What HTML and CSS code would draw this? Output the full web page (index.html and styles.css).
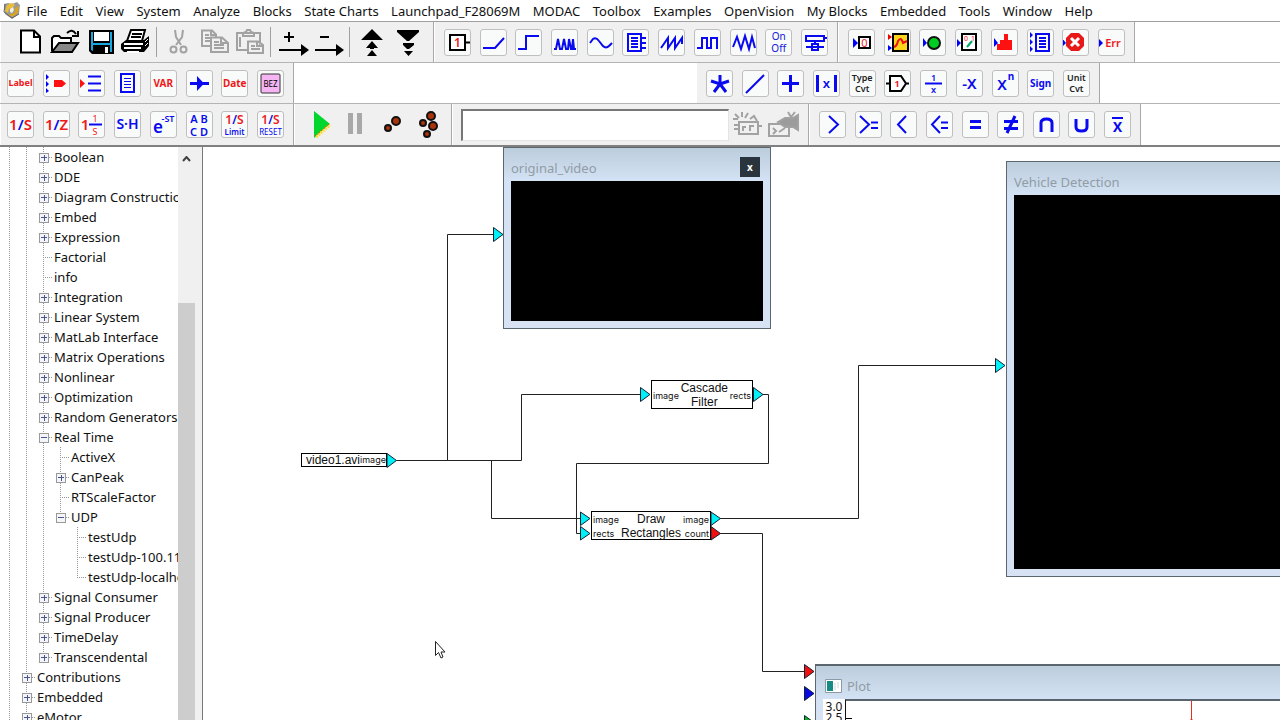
FILE: index.html
```html
<!DOCTYPE html>
<html lang="en">
<head>
<meta charset="utf-8">
<title>Vehicle Detection diagram</title>
<link rel="stylesheet" href="styles.css">
</head>
<body>
<nav class="menubar">
  <svg class="logo" width="18" height="18" viewBox="0 0 18 18"><path d="M1 3 5 2 9 3 14 1 17 4 16 13 9 18 2 13Z" fill="#9a9a98"/><path d="M4 4 9 2 12 4 9 7 6 8 5 12 2 10Z" fill="#e9bd35"/><path d="M12 7 16 5 15 12 9 16 5 13 9 13 12 11Z" fill="#d9a520"/><path d="M7 8 10 6 11 9 9 12 7 11Z" fill="#f4f0dc"/><path d="M2 3 1 11 9 17 16 13" fill="none" stroke="#5f6468"/></svg>
  <button>File</button><button>Edit</button><button>View</button><button>System</button><button>Analyze</button><button>Blocks</button><button>State Charts</button><button>Launchpad_F28069M</button><button>MODAC</button><button>Toolbox</button><button>Examples</button><button>OpenVision</button><button>My Blocks</button><button>Embedded</button><button>Tools</button><button>Window</button><button>Help</button>
</nav>

<div class="toolbars">
  <div class="row">
    <div class="group files">
      <button class="flat" aria-label="New"><svg viewBox="0 0 35 27"><path d="M9 1.5H22L28 7.5V23.500H9Z" fill="#fff" stroke="#000" stroke-width="2"/><path d="M22 1V8H28" fill="none" stroke="#000" stroke-width="2"/></svg></button>
      <button class="flat" aria-label="Open"><svg viewBox="0 0 35 27"><path d="M5 22V9L7 7H12L14 9H24V14" fill="#fff" stroke="#000" stroke-width="2"/><path d="M5 23 12 14H31L25 23Z" fill="#888" stroke="#000" stroke-width="2"/><path d="M20 4Q25-1 29 5M31 2V7H25" fill="none" stroke="#000" stroke-width="2"/></svg></button>
      <button class="flat" aria-label="Save"><svg viewBox="0 0 35 27"><path d="M7 1H32V25H10L7 22Z" fill="#000"/><path d="M9 3H11V14H28V3H30V23H28V16H11V22L9 21Z" fill="#18a8e0"/><path d="M12 3H27V12H12Z" fill="#fff"/><path d="M23 18H26V24H23Z" fill="#fff"/></svg></button>
      <button class="flat" aria-label="Print"><svg viewBox="0 0 35 27"><path d="M10 12 14 1H28L25 12" fill="#fff" stroke="#000" stroke-width="2"/><path d="M15 5H25M14 8H24" stroke="#000" stroke-width="2"/><path d="M4 15 9 11H27L32 7V17L27 23H7L4 20Z" fill="#000"/><path d="M7 15H26M7 19H24M10 23H22" stroke="#fff" stroke-width="2"/><path d="M28 13 31 10M28 17 31 14" stroke="#fff"/></svg></button>
      <span class="sep"></span>
      <button class="flat" aria-label="Cut"><svg class="off" viewBox="0 0 35 27"><path d="M14 1 15 8 20 16M22 1 21 8 15 16"/><circle cx="12.500" cy="20.500" r="3"/><circle cx="22.500" cy="20.500" r="3"/></svg></button>
      <button class="flat" aria-label="Copy"><svg class="off" viewBox="0 0 35 27"><path d="M6 1.500H16L20 5.500V17H6ZM15 2V6H20M9 6H13M9 9H17M9 12H14"/><path class="pale" d="M15 8.500H26L32 14V23H15ZM25 9V14H31M18 13H23M18 16H28M18 19H28"/></svg></button>
      <button class="flat" aria-label="Paste"><svg class="off" viewBox="0 0 35 27"><path d="M6 4H29V21H6ZM12 4V7H23V4L20 3 19 1H16L15 3ZM9 8V18"/><path class="pale" d="M17 12.500H27L32 16V24H17ZM26 13V17H31M20 17H24M20 20H29"/></svg></button>
      <span class="sep"></span>
      <button class="flat" aria-label="Add connector"><svg viewBox="0 0 35 27"><path d="M9 8H19M14 3V13M4 21H28" stroke="#000" stroke-width="2"/><path d="M26 15 34 21 26 27Z"/></svg></button>
      <button class="flat" aria-label="Remove connector"><svg viewBox="0 0 35 27"><path d="M10 8H19M5 21H29" stroke="#000" stroke-width="2"/><path d="M26 15 34 21 26 27Z"/></svg></button>
      <span class="sep"></span>
      <button class="flat" aria-label="Move up"><svg viewBox="0 0 35 27"><path d="M18 0 29 11H7ZM18 12 24 19H20V20H16V19H12ZM18 21 23 27H13Z"/></svg></button>
      <button class="flat" aria-label="Move down"><svg viewBox="0 0 35 27"><path d="M8 1H30V3L20 12H18L8 3ZM14 14H25V16L20 20H18L14 16ZM15 22H24L19.500 27Z"/></svg></button>
    </div>
    <div class="group signals">
      <button class="tool" aria-label="Constant"><svg viewBox="0 0 27 27"><path d="M6 6H21V21H6ZM22 13.500H26" fill="#fff" stroke="#000" stroke-width="2"/><text class="red semi" x="13.500" y="18" font-size="12">1</text></svg></button>
      <button class="tool" aria-label="Ramp"><svg class="ln" viewBox="0 0 27 27"><path d="M3 19H15L24 9"/></svg></button>
      <button class="tool" aria-label="Step"><svg class="ln" viewBox="0 0 27 27"><path d="M3 20H11V7H24"/></svg></button>
      <button class="tool" aria-label="Pulse"><svg class="ln" viewBox="0 0 27 27"><path d="M3 20H5L7 10 9 20H11L13 10 15 20H17L18 10 20 20H21L22 10 23 20H25"/></svg></button>
      <button class="tool" aria-label="Sinusoid"><svg class="ln" viewBox="0 0 27 27"><path d="M3 14 6 10Q9 8 12 12L16 17Q19 20 22 17L25 14"/></svg></button>
      <button class="tool" aria-label="Dialog table"><svg class="ln" viewBox="0 0 27 27"><path d="M6 5H19V22H6ZM9 9H16M9 12H16M9 15H16M9 18H16M19 9H24M19 14H24M19 19H24"/></svg></button>
      <button class="tool" aria-label="Sawtooth"><svg class="ln" viewBox="0 0 27 27"><path d="M3 19 10 9V19L17 9V19L24 9V15"/></svg></button>
      <button class="tool" aria-label="Square wave"><svg class="ln" viewBox="0 0 27 27"><path d="M3 19H8V9H13V19H17V9H23V20"/></svg></button>
      <button class="tool" aria-label="Triangle wave"><svg class="ln" viewBox="0 0 27 27"><path d="M3 18 7 8 11 20 15 7 19 20 22 8 25 19"/></svg></button>
      <button class="tool on">On<br>Off</button>
      <button class="tool" aria-label="Slider"><svg class="ln" viewBox="0 0 27 27"><path d="M5 7H23V12H5ZM23 9H26M14 12V15M5 18H23M11 15H17V21H11Z"/></svg></button>
    </div>
    <div class="group sinks">
      <button class="tool" aria-label="Display"><svg viewBox="0 0 27 27"><path d="M5 9 10 14 5 19Z" fill="#00f"/><path d="M11 8H22V19H11Z" fill="#fff" stroke="#000" stroke-width="2"/><text class="red" x="16.500" y="18" font-size="11">0</text></svg></button>
      <button class="tool" aria-label="Plot"><svg viewBox="0 0 27 27"><path d="M4 5 8 8 4 11Z" fill="#e00"/><path d="M4 16 8 19 4 22Z" fill="#00f"/><path d="M9 5H24V22H9Z" fill="#ffd51c" stroke="#000" stroke-width="2"/><path d="M10 18Q13 17 14 12Q17 7 19 14L23 12" stroke="#e11" stroke-width="2" fill="none"/></svg></button>
      <button class="tool" aria-label="Light"><svg viewBox="0 0 27 27"><path d="M4 9 8 14 4 18Z" fill="#00f"/><circle cx="15" cy="14" r="6" fill="#0c2" stroke="#111" stroke-width="2"/></svg></button>
      <button class="tool" aria-label="Switch display"><svg viewBox="0 0 27 27"><path d="M2 10 6 14 2 18Z" fill="#00f"/><path d="M7 5H21V21H7Z" fill="#fff" stroke="#000" stroke-width="2"/><text class="red" x="11" y="12" font-size="7">0</text><text class="red" x="18" y="12" font-size="7">1</text><path d="M12 18 17 12" stroke="#0a6" stroke-width="2"/></svg></button>
      <button class="tool" aria-label="Histogram"><svg viewBox="0 0 27 27"><path d="M3 9 7 14 3 18Z" fill="#00f"/><path d="M6 21V15H9V11H13V5H17V11H21V21Z" fill="#f11"/></svg></button>
      <button class="tool" aria-label="Export"><svg class="ln" viewBox="0 0 27 27"><path d="M9 5H22V22H9ZM12 9H19M12 12H19M12 15H19M12 18H19"/><path class="fill" d="M3 3 6 6 3 9ZM3 10 6 13 3 16ZM3 17 6 20 3 23Z"/></svg></button>
      <button class="tool" aria-label="Stop"><svg viewBox="0 0 27 27"><path d="M0 9 4 14 0 18Z" fill="#00f"/><path d="M9 4H17L22 9V17L17 22H9L4 17V9Z" fill="#e81818"/><path d="M9 9 17 17M17 9 9 17" stroke="#fff" stroke-width="3"/></svg></button>
      <button class="tool" aria-label="Error"><svg viewBox="0 0 27 27"><path d="M1 10 5 14 1 18Z" fill="#00f"/><text class="red semi" x="15" y="18" font-size="11">Err</text></svg></button>
    </div>
  </div>

  <div class="row">
    <div class="group eight">
      <button class="tool small red bold">Label</button>
      <button class="tool" aria-label="Bus"><svg viewBox="0 0 27 27"><path d="M3 4 6 7 3 10ZM3 11 6 14 3 17ZM3 18 6 21 3 23Z" fill="#00f"/><path d="M11 10H19L23 13.500 19 17H11Z" fill="#f11"/></svg></button>
      <button class="tool" aria-label="Merge"><svg class="ln" viewBox="0 0 27 27"><path d="M10 6.500H23M10 13.500H23M10 20.500H23"/><path d="M2 9 7 13.500 2 18Z" fill="#f11" stroke="none"/></svg></button>
      <button class="tool" aria-label="Comment"><svg class="ln" viewBox="0 0 27 27"><path d="M7 4H20V22H7Z"/><path d="M10 8.500H17M10 11.500H17M10 14.500H17M10 17.500H17" stroke-width="1"/></svg></button>
      <button class="tool med red bold">VAR</button>
      <button class="tool" aria-label="Wire positioner"><svg class="ln" viewBox="0 0 27 27"><path d="M4 13.500H23" stroke-width="3"/><path class="fill" d="M11 6 18 13.500 11 21Z"/></svg></button>
      <button class="tool med red bold">Date</button>
      <button class="tool" aria-label="Bezel"><svg viewBox="0 0 27 27"><rect x="4" y="4" width="19" height="19" rx="1" fill="#f5b5f3" stroke="#333" stroke-width="1"/><text x="13.500" y="17" font-size="8">BEZ</text></svg></button>
    </div>
    <div class="group math">
      <button class="tool" aria-label="Multiply"><svg class="ln" viewBox="0 0 27 27"><path d="M14 5V14L5 11M14 14 23 11M14 14 8 22M14 14 20 22" stroke-width="3"/></svg></button>
      <button class="tool" aria-label="Divide"><svg class="ln" viewBox="0 0 27 27"><path d="M4 23 22 5"/></svg></button>
      <button class="tool" aria-label="Sum"><svg class="ln" viewBox="0 0 27 27"><path d="M13.500 5V22M5 13.500H22" stroke-width="3"/></svg></button>
      <button class="tool" aria-label="Absolute value"><svg class="ln" viewBox="0 0 27 27"><path d="M4.500 5V22M22.500 5V22" stroke-width="3"/><text class="blue semi" x="13.500" y="18" font-size="13">x</text></svg></button>
      <button class="tool cvt semi">Type<br>Cvt</button>
      <button class="tool" aria-label="Gain"><svg viewBox="0 0 27 27"><path d="M2 13.500H6M22 13.500H25M6 6H17L22 13.500 17 21H6Z" fill="#fff" stroke="#000" stroke-width="2"/><text class="red bold" x="13" y="17" font-size="9">1</text></svg></button>
      <button class="tool" aria-label="Reciprocal"><svg class="ln" viewBox="0 0 27 27"><path d="M5 13.500H22"/><text class="blue semi" x="13.500" y="11" font-size="9">1</text><text class="blue semi" x="13.500" y="23" font-size="9">x</text></svg></button>
      <button class="tool big blue semi">-X</button>
      <button class="tool" aria-label="Power"><svg viewBox="0 0 27 27"><text class="blue semi" x="10" y="20" font-size="15">X</text><text class="blue bold" x="19" y="10" font-size="10">n</text></svg></button>
      <button class="tool med blue bold">Sign</button>
      <button class="tool cvt semi">Unit<br>Cvt</button>
    </div>
  </div>

  <div class="row">
    <div class="group eight">
      <button class="tool" aria-label="Integrator"><svg viewBox="0 0 27 27"><text class="red semi" x="13.500" y="19" font-size="15">1<tspan class="blue">/</tspan>S</text></svg></button>
      <button class="tool" aria-label="Unit delay"><svg viewBox="0 0 27 27"><text class="red semi" x="13.500" y="19" font-size="15">1<tspan class="blue">/</tspan>Z</text></svg></button>
      <button class="tool" aria-label="Transfer function"><svg class="ln" viewBox="0 0 27 27"><path d="M11 13.500H24"/><text class="red semi" x="7" y="19" font-size="15">1</text><text class="red" x="17" y="11" font-size="9">1</text><text class="red" x="17" y="24" font-size="9">S</text></svg></button>
      <button class="tool" aria-label="Sample hold"><svg viewBox="0 0 27 27"><text class="blue semi" x="13.500" y="18" font-size="14">S·H</text></svg></button>
      <button class="tool" aria-label="Time delay"><svg viewBox="0 0 27 27"><text class="blue semi" x="8" y="22" font-size="17">e</text><text class="blue semi" x="18" y="11" font-size="9">-ST</text></svg></button>
      <button class="tool abcd blue semi">A B<br>C D</button>
      <button class="tool" aria-label="Limited integrator"><svg viewBox="0 0 27 27"><text class="red semi" x="13.500" y="13" font-size="12">1<tspan class="blue">/</tspan>S</text><text class="blue semi" x="13.500" y="24" font-size="8">Limit</text></svg></button>
      <button class="tool" aria-label="Reset integrator"><svg viewBox="0 0 27 27"><text class="red semi" x="13.500" y="13" font-size="12">1<tspan class="blue">/</tspan>S</text><text class="blue" x="13.500" y="24" font-size="8">RESET</text></svg></button>
    </div>
    <div class="group run">
      <button class="flat" aria-label="Go"><svg viewBox="0 0 35 27"><path d="M10 0 26 13 10 27Z" fill="#00d62b"/><path d="M12 26 26 14" stroke="#ffdc28" stroke-width="3" stroke-dasharray="2 1"/><path d="M11 25 25 13" stroke="#e42" stroke-dasharray="2 2"/></svg></button>
      <button class="flat" aria-label="Pause"><svg viewBox="0 0 35 27"><path d="M9 2H14V23H9ZM18 2H23V23H18Z" fill="#a8a8a8"/></svg></button>
      <button class="flat" aria-label="Single step"><svg viewBox="0 0 35 27"><g fill="#a93409" stroke="#111" stroke-width="2"><circle cx="22" cy="10" r="4"/><circle cx="14" cy="17" r="3"/></g></svg></button>
      <button class="flat" aria-label="Multi step"><svg viewBox="0 0 35 27"><g fill="#a93409" stroke="#111" stroke-width="2"><circle cx="22" cy="5" r="4"/><circle cx="14" cy="12" r="3"/><circle cx="24" cy="15" r="4"/><circle cx="18" cy="23" r="3"/></g></svg></button>
    </div>
    <div class="group search">
      <input type="text" aria-label="Status">
      <button class="flat" aria-label="Compile"><svg class="off" viewBox="0 0 35 27"><path d="M8 11H27V23H8ZM3 14H8M3 18H8M27 15H31M12 20V16H15M19 20V15H23M4 3 8 7M11 1V6M17 2 14 7M2 8H7M19 8 23 5 26 10"/></svg></button>
      <button class="flat" aria-label="Record"><svg class="off" viewBox="0 0 35 27"><path d="M3 13H23V25H3ZM7 17 10 20 7 23M13 21 19 17M22 1 25 6 29 1"/><path d="M12 11 19 7H27L32 4V19L27 16H19Z" fill="#9c9c9c"/></svg></button>
    </div>
    <div class="group logic">
      <button class="tool" aria-label="Greater than"><svg class="ln" viewBox="0 0 27 27"><path d="M10 5 19 13.500 10 22"/></svg></button>
      <button class="tool" aria-label="Greater or equal"><svg class="ln" viewBox="0 0 27 27"><path d="M5 5 14 13.500 5 22M16 11.500H23M16 17H23"/></svg></button>
      <button class="tool" aria-label="Less than"><svg class="ln" viewBox="0 0 27 27"><path d="M16 5 8 13.500 16 22"/></svg></button>
      <button class="tool" aria-label="Less or equal"><svg class="ln" viewBox="0 0 27 27"><path d="M14 5 6 13.500 14 22M15 11.500H22M15 17H22"/></svg></button>
      <button class="tool" aria-label="Equal"><svg class="ln" viewBox="0 0 27 27"><path d="M8 10.500H19M8 16.500H19" stroke-width="3"/></svg></button>
      <button class="tool" aria-label="Not equal"><svg class="ln" viewBox="0 0 27 27"><path d="M7 10.500H21M7 17.500H21M10 22 18 5" stroke-width="3"/></svg></button>
      <button class="tool" aria-label="And"><svg class="ln" viewBox="0 0 27 27"><path d="M8 21V12Q8 8 13.500 8T19 12V21" stroke-width="3"/></svg></button>
      <button class="tool" aria-label="Or"><svg class="ln" viewBox="0 0 27 27"><path d="M8 8V16Q8 20 13.500 20T19 16V8" stroke-width="3"/></svg></button>
      <button class="tool" aria-label="Not"><svg class="ln" viewBox="0 0 27 27"><path d="M8 7H19"/><text class="blue semi" x="13.500" y="21" font-size="17">x</text></svg></button>
    </div>
  </div>
</div>

<main>
  <aside>
    <div class="tree">
      <ul>
        <li>
          <ul>
            <li>
              <ul>
                <li><div class="node"><button class="plus" aria-label="Expand"></button>Boolean</div></li>
                <li><div class="node"><button class="plus" aria-label="Expand"></button>DDE</div></li>
                <li><div class="node"><button class="plus" aria-label="Expand"></button>Diagram Construction</div></li>
                <li><div class="node"><button class="plus" aria-label="Expand"></button>Embed</div></li>
                <li><div class="node"><button class="plus" aria-label="Expand"></button>Expression</div></li>
                <li><div class="node">Factorial</div></li>
                <li><div class="node">info</div></li>
                <li><div class="node"><button class="plus" aria-label="Expand"></button>Integration</div></li>
                <li><div class="node"><button class="plus" aria-label="Expand"></button>Linear System</div></li>
                <li><div class="node"><button class="plus" aria-label="Expand"></button>MatLab Interface</div></li>
                <li><div class="node"><button class="plus" aria-label="Expand"></button>Matrix Operations</div></li>
                <li><div class="node"><button class="plus" aria-label="Expand"></button>Nonlinear</div></li>
                <li><div class="node"><button class="plus" aria-label="Expand"></button>Optimization</div></li>
                <li><div class="node"><button class="plus" aria-label="Expand"></button>Random Generators</div></li>
                <li><div class="node"><button class="minus" aria-label="Collapse"></button>Real Time</div>
                  <ul>
                    <li><div class="node">ActiveX</div></li>
                    <li><div class="node"><button class="plus" aria-label="Expand"></button>CanPeak</div></li>
                    <li><div class="node">RTScaleFactor</div></li>
                    <li class="last"><div class="node"><button class="minus" aria-label="Collapse"></button>UDP</div>
                      <ul>
                        <li><div class="node">testUdp</div></li>
                        <li><div class="node">testUdp-100.11</div></li>
                        <li class="last"><div class="node">testUdp-localhost</div></li>
                      </ul>
                    </li>
                  </ul>
                </li>
                <li><div class="node"><button class="plus" aria-label="Expand"></button>Signal Consumer</div></li>
                <li><div class="node"><button class="plus" aria-label="Expand"></button>Signal Producer</div></li>
                <li><div class="node"><button class="plus" aria-label="Expand"></button>TimeDelay</div></li>
                <li class="last"><div class="node"><button class="plus" aria-label="Expand"></button>Transcendental</div></li>
              </ul>
            </li>
            <li><div class="node"><button class="plus" aria-label="Expand"></button>Contributions</div></li>
            <li><div class="node"><button class="plus" aria-label="Expand"></button>Embedded</div></li>
            <li><div class="node"><button class="plus" aria-label="Expand"></button>eMotor</div></li>
          </ul>
        </li>
      </ul>
    </div>
    <div class="scroll">
      <button aria-label="Scroll up"><svg width="9" height="6" viewBox="0 0 9 6"><path d="M1 5 4.500 1 8 5" fill="none" stroke="#444" stroke-width="2"/></svg></button>
      <div class="thumb"></div>
    </div>
  </aside>

  <section class="canvas">
    <svg class="wires">
      <g transform="translate(-203 -147)">
        <g class="wire">
          <path d="M396 460.500H521.500V394.500H641M447.500 460V234.500H493M491.500 460V518.500H581"/>
          <path d="M763 394.500H768.500V463.500H576.500V533.500H581M720 518.500H858.500V365.500H996M720 533.500H762.500V671.500H805"/>
        </g>
        <g class="port">
          <path d="M387 453.500 396.500 460.500 387 467.500Z"/>
          <path d="M493.500 227.500 503 234.500 493.500 241.500Z"/>
          <path d="M640.500 387.500 650 394.500 640.500 401.500Z"/>
          <path d="M753.500 387.500 763 394.500 753.500 401.500Z"/>
          <path d="M580.500 512 590 518.500 580.500 525.500Z"/>
          <path d="M580.500 526.500 590 533.500 580.500 540Z"/>
          <path d="M711 512 720.500 518.500 711 525.500Z"/>
          <path d="M995.500 358.500 1005 365.500 995.500 372.500Z"/>
          <path class="r" d="M711 526.500 720.500 533.500 711 540Z"/>
          <path class="r" d="M804.500 664.500 814 671.500 804.500 678.500Z"/>
          <path class="b" d="M804.500 686.500 814 693.500 804.500 700.500Z"/>
          <path class="g" d="M804.500 715.500 814 722.500 804.500 729.500Z"/>
        </g>
        <path d="M435.500 641.500V655.500L438.500 652.500 441 658 443 657 441 652H445Z" fill="#fff" stroke="#222"/>
      </g>
    </svg>

    <div class="block source"><b>video1.avi</b><i>image</i></div>
    <div class="block cascade"><div class="ports"><i>image</i></div><b>Cascade<br>Filter</b><div class="ports"><i>rects</i></div></div>
    <div class="block draw"><div class="ports"><i>image</i><i>rects</i></div><b>Draw<br>Rectangles</b><div class="ports out"><i>image</i><i>count</i></div></div>

    <div class="win original"><header><span>original_video</span><button aria-label="Close">x</button></header><div class="video"></div></div>
    <div class="win vehicle"><header><span>Vehicle Detection</span></header><div class="video"></div></div>
    <div class="win plot">
      <header><svg width="17" height="14" viewBox="0 0 17 14"><path d="M.5.500H16.500V13.500H.5Z" fill="#fff" stroke="#8b9aa5"/><path d="M2 2H8V12H2Z" fill="#168b85"/><path d="M10 4V11M13 3V9" stroke="#ccd6dc"/></svg><span>Plot</span></header>
      <div class="chart"><div class="scale"><span>3.0</span><span>2.5</span></div><svg class="axes"><path d="M0 17.500H6" stroke="#000"/><path d="M345.500 0V21M344 19H347" stroke="#e03020" fill="none"/></svg></div>
    </div>
  </section>
</main>
</body>
</html>
```

FILE: styles.css
```css
* { box-sizing: border-box; }
body {
  margin: 0;
  height: 100vh;
  display: flex;
  flex-direction: column;
  overflow: hidden;
  background: #fff;
  color: #111;
  font: 13px/20px "Noto Sans", "Open Sans", sans-serif;
}
button { border: 0; padding: 0; background: none; font: inherit; color: inherit; }
ul { list-style: none; margin: 0; padding: 0; }

.menubar { display: flex; justify-content: space-between; width: 1093px; height: 21px; padding-left: 3px; white-space: nowrap; flex: none; }
.menubar .logo { flex: none; margin-right: -7px; margin-top: 1px; }

.toolbars { flex: none; border-top: 1px solid #a0a0a0; border-bottom: 2px solid #808080; }
.row { display: flex; height: 41px; border-bottom: 1px solid #b4b4b4; }
.row:last-child { border-bottom: 0; }
.group { display: flex; align-items: center; background: #f0f0f0; border-right: 1px solid #a8a8a8; border-left: 1px solid #fff; flex: none; }
.signals, .sinks, .eight, .math, .logic { justify-content: space-between; }
.files { width: 434px; padding-left: 11px; }
.signals { width: 404px; padding: 0 9px; }
.sinks { width: 297px; padding: 0 9px; }
.eight { width: 294px; padding: 0 9px 0 6px; }
.math { width: 404px; padding: 0 9px; margin-left: 402px; }
.run { width: 158px; padding-left: 9px; }
.search { width: 357px; padding-left: 8px; }
.logic { width: 332px; padding: 0 9px; }
.search input { width: 268px; height: 32px; margin-right: 2px; background: #fff; border: 2px solid #777; border-right: 1px solid #e4e4e4; border-bottom: 1px solid #e4e4e4; }
.sep { width: 1px; height: 30px; margin: 0 4px; background: #a0a0a0; }

.flat { width: 35px; height: 27px; flex: none; }
.tool { width: 27px; height: 27px; flex: none; border: 1px solid #bfbfbf; border-radius: 3px; background: #f8fbfa; text-align: center; overflow: hidden; white-space: nowrap; display: flex; align-items: center; justify-content: center; }
.flat svg { display: block; width: 35px; height: 27px; overflow: visible; }
.tool svg { display: block; width: 27px; height: 27px; flex: none; }
.tool text { text-anchor: middle; stroke: none; }
.red { color: #f01818; fill: #f01818; }
.blue { color: #0a0af0; fill: #0a0af0; }
.semi { font-weight: 600; }
.bold { font-weight: 700; }
.ln { fill: none; stroke: #0a0af0; stroke-width: 2; }
.ln .fill { fill: #0a0af0; stroke: none; }
.off { fill: none; stroke: #a2a2a2; stroke-width: 2; }
.off .pale { fill: #f0f0f0; }
.small { font-size: 9px; }
.med { font-size: 10px; }
.big { font-size: 15px; }
.on { font-size: 10px; line-height: 12px; color: #1414d8; }
.cvt { font-size: 9px; line-height: 11px; color: #222; }
.abcd { font-size: 11px; line-height: 13px; }

main { flex: 1; display: flex; min-height: 0; }
aside { width: 203px; flex: none; display: flex; border-right: 1px solid #777; background: #f0f0f0; }
.tree { width: 178px; padding-left: 1px; overflow: hidden; background: #fff; white-space: nowrap; }
.tree li { padding-left: 17px; background: repeating-linear-gradient(#999 0 1px, transparent 1px 2px) 8px 0 / 1px 100% no-repeat; }
.tree li.last { background-size: 1px 10px; }
.node { display: flex; align-items: center; height: 20px; margin-left: -17px; padding-left: 19px; background: repeating-linear-gradient(90deg, #999 0 1px, transparent 1px 2px) 8px 10px / 9px 1px no-repeat; }
.node button { width: 10px; height: 10px; margin: 1px 5px 0 -15px; flex: none; border: 1px solid #999; background: #f4f5f8; }
.node .plus { background: linear-gradient(#4a5590, #4a5590) center / 6px 1px no-repeat, linear-gradient(#4a5590, #4a5590) center / 1px 6px no-repeat, #f4f5f8; }
.node .minus { background: linear-gradient(#4a5590, #4a5590) center / 6px 1px no-repeat, #f4f5f8; }
.scroll { width: 17px; display: flex; flex-direction: column; }
.scroll button { height: 17px; margin-bottom: 139px; flex: none; }
.thumb { flex: 1; background: #cdcdcd; }

.canvas { flex: 1; min-width: 0; position: relative; overflow: hidden; background: #fff; }
.wires { position: absolute; inset: 0; width: 100%; height: 100%; }
.wire { fill: none; stroke: #222; }
.port { fill: #00f0f8; stroke: #123; }
.port .r { fill: #f01010; }
.port .b { fill: #0808e8; }
.port .g { fill: #10b020; }

.block { position: absolute; display: flex; align-items: center; justify-content: space-between; border: 1px solid #000; background: #fff; font: 12px/14px "Liberation Sans", Arial, sans-serif; text-align: center; padding: 0 1px; }
.block b { font-weight: 400; }
.block i { font: 9px/14px Inter, sans-serif; }
.ports { display: flex; flex-direction: column; align-items: flex-start; padding-top: 2px; }
.ports.out { align-items: flex-end; }
.source { left: 98px; top: 306px; width: 86px; height: 14px; padding-left: 4px; }
.cascade { left: 448px; top: 233px; width: 102px; height: 29px; }
.draw { left: 388px; top: 364px; width: 120px; height: 29px; }

.win { position: absolute; display: flex; flex-direction: column; border: 1px solid #5c666e; background: linear-gradient(#bccddc, #d3e2f4 33px, #d7e3f4); padding: 0 7px 7px; color: #919ca6; }
.win header { display: flex; align-items: center; height: 33px; padding-top: 7px; flex: none; }
.win header button { width: 20px; height: 20px; margin: 0 3px 2px auto; background: #2a343c; color: #fff; font: bold 10px/18px "Noto Sans", sans-serif; }
.video { flex: 1; background: #000; }
.original { left: 300px; top: 0; width: 268px; height: 182px; }
.vehicle { left: 803px; right: 0; top: 14px; height: 416px; padding-right: 0; border-right: 0; }
.plot { left: 612px; right: 0; top: 517px; bottom: 0; padding: 0 0 0 7px; border-width: 2px 0 0 1px; }
.plot header { gap: 5px; padding-left: 2px; }
.chart { flex: 1; display: flex; min-height: 0; overflow: hidden; background: #fff; color: #111; }
.scale { width: 22px; display: flex; flex-direction: column; font-size: 12px; line-height: 11px; padding-top: 2px; text-align: center; flex: none; }
.axes { flex: 1; min-width: 0; height: 100%; border-left: 1px solid #111; border-top: 2px solid #59636b; }
```
